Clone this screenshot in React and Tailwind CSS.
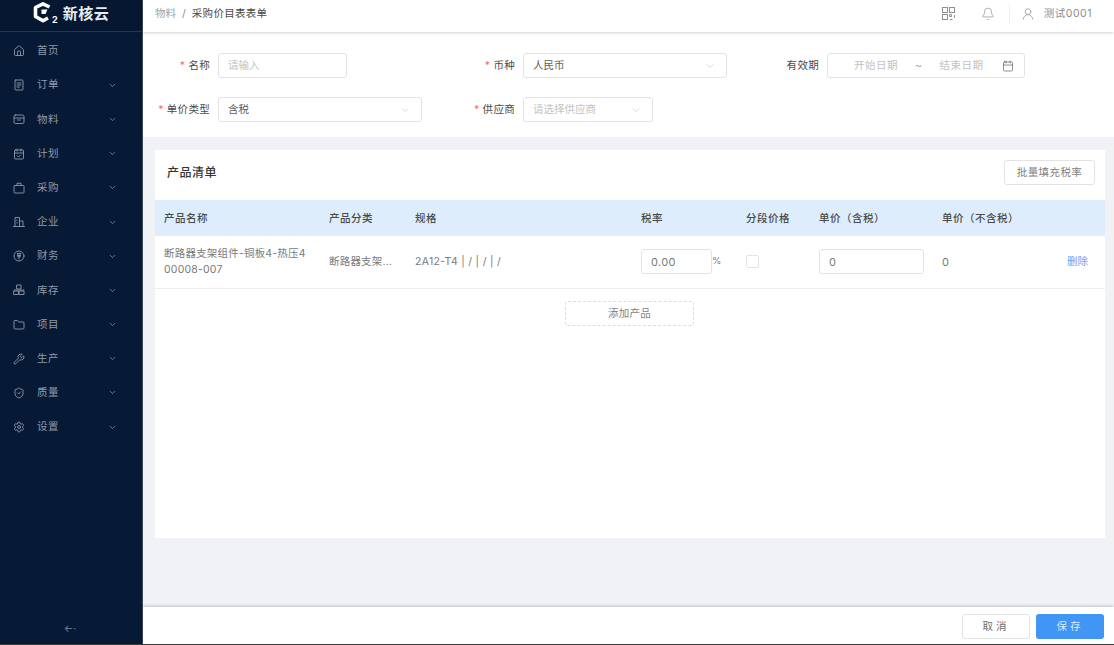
import React from "react";
import { ChevronDown, Bell, UserRound, Calendar, House, CalendarCheck, Folder, Wrench, ShieldCheck, Settings } from "lucide-react";

const Svg = ({ children }) => (
  <svg width="12" height="12" viewBox="0 0 24 24" fill="none" stroke="currentColor" strokeWidth="1.8" strokeLinejoin="round" strokeLinecap="round">
    {children}
  </svg>
);

const OrderIcon = () => (
  <Svg>
    <rect x="4" y="2" width="16" height="20" rx="1.5" />
    <path d="M8 8h8M8 12h8M8 16h5" />
  </Svg>
);
const MaterialIcon = () => (
  <Svg>
    <rect x="2" y="4" width="20" height="17" rx="3" />
    <path d="M2 10h20M9 14h6" />
  </Svg>
);
const BagIcon = () => (
  <Svg>
    <rect x="2" y="7" width="20" height="15" rx="1.5" />
    <path d="M8 7V2.5h8V7" />
  </Svg>
);
const CompanyIcon = () => (
  <Svg>
    <path d="M4 20V3h9v17M13 10h7v10M1 21h22M8 8v1M8 13v1" />
  </Svg>
);
const MoneyIcon = () => (
  <Svg>
    <circle cx="12" cy="12" r="10" />
    <path d="M9 7h6M9.5 11h5M9.5 7v6.5h5V7M12 13.5V18" />
  </Svg>
);
const StockIcon = () => (
  <Svg>
    <rect x="8" y="2" width="8" height="8" />
    <rect x="2" y="14" width="9" height="7" />
    <rect x="13" y="14" width="9" height="7" />
    <path d="M2 12h20" />
  </Svg>
);

const menu = [
  { label: "首页", icon: <House size={12} strokeWidth={1.8} />, arrow: false },
  { label: "订单", icon: <OrderIcon />, arrow: true },
  { label: "物料", icon: <MaterialIcon />, arrow: true },
  { label: "计划", icon: <CalendarCheck size={12} strokeWidth={1.8} />, arrow: true },
  { label: "采购", icon: <BagIcon />, arrow: true },
  { label: "企业", icon: <CompanyIcon />, arrow: true },
  { label: "财务", icon: <MoneyIcon />, arrow: true },
  { label: "库存", icon: <StockIcon />, arrow: true },
  { label: "项目", icon: <Folder size={12} strokeWidth={1.8} />, arrow: true },
  { label: "生产", icon: <Wrench size={12} strokeWidth={1.8} />, arrow: true },
  { label: "质量", icon: <ShieldCheck size={12} strokeWidth={1.8} />, arrow: true },
  { label: "设置", icon: <Settings size={12} strokeWidth={1.8} />, arrow: true },
];

const Logo = () => (
  <div className="flex items-start h-[31px] pl-[33px] pt-[2px]">
    <svg width="21" height="21" viewBox="0 0 21 21" fill="none" className="shrink-0">
      <path d="M16.5 5 L10 1.8 L2.5 5.5 V14.5 L10 18.8 L15 16" stroke="#ffffff" strokeWidth="3.6" strokeLinejoin="round" />
      <path d="M8.5 7.5 H14.5 L12.5 12 H8.5 Z" fill="#ffffff" />
    </svg>
    <span className="text-[9px] font-bold text-white -ml-[2px] mt-[13px] leading-none">2</span>
    <span className="ml-[5px] mt-[4px] text-[15px] leading-none font-bold text-[#e8ebef] tracking-[0.5px]">新核云</span>
  </div>
);

const Sidebar = () => (
  <aside className="w-[143px] shrink-0 bg-[#071a35] border-r border-[#3c4757] flex flex-col">
    <div className="bg-[#051731] border-b border-[#14396b]">
      <Logo />
    </div>
    <nav className="pt-[2px]">
      {menu.map((m) => (
        <div key={m.label} className="h-[34.2px] flex items-center pl-[13px] pr-[25px] text-[#8f99a9]">
          <span className="w-[12px] flex justify-center">{m.icon}</span>
          <span className="ml-[12px] text-[10.5px] tracking-[0.5px] flex-1">{m.label}</span>
          {m.arrow && <ChevronDown size={9} strokeWidth={2} className="text-[#8a95a5]" />}
        </div>
      ))}
    </nav>
    <div className="mt-auto pb-[11px] flex justify-center text-[#7b8695]">
      <span className="text-[10px] leading-none pr-[2px]">←·</span>
    </div>
  </aside>
);

const Topbar = () => (
  <header className="relative z-10 h-[32px] shrink-0 bg-white shadow-[0_1px_3px_rgba(0,0,0,0.18)] flex items-center pl-[12px] pr-[22px] pb-[5px] text-[10.5px]">
    <span className="text-[#a3a3a3]">物料</span>
    <span className="mx-[6px] text-[#8c8c8c]">/</span>
    <span className="text-[#4a4a4a] tracking-[0.3px]">采购价目表表单</span>
    <div className="ml-auto flex items-center text-[#8f8f8f]">
      <svg width="13" height="13" viewBox="0 0 13 13" fill="none" stroke="currentColor" strokeWidth="1">
        <rect x="0.5" y="0.5" width="5" height="5" />
        <rect x="7.5" y="0.5" width="5" height="5" />
        <rect x="0.5" y="7.5" width="5" height="5" />
        <path d="M7.5 7.5h2v2h-2zM12.5 8v3M8 12.5h2.5" />
      </svg>
      <Bell size={14} strokeWidth={1.2} className="ml-[26px]" />
      <span className="ml-[14px] w-px h-[18px] bg-[#efefef]" />
      <UserRound size={14} strokeWidth={1.2} className="ml-[11px]" />
      <span className="ml-[9px] text-[#8c8c8c] tracking-[0.5px]">测试0001</span>
    </div>
  </header>
);

const inputClass = "h-[25px] rounded-[3px] border border-[#e3e3e3] bg-white flex items-center px-[9px] pt-[1px] text-[10.5px]";

const Field = ({ label, required, children }) => (
  <div className="flex items-center">
    <label className="w-[67px] pt-[1px] text-right text-[10.5px] text-[#4a4a4a] whitespace-nowrap tracking-[0.3px]">
      {required && <span className="text-[#f26d6d] mr-[3px]">*</span>}
      {label}
    </label>
    <div className="ml-[8px]">{children}</div>
  </div>
);

const Select = ({ width, value, placeholder }) => (
  <div className={`${inputClass} ${width} justify-between`}>
    <span className={value ? "text-[#5e5e5e]" : "text-[#c2c2c2]"}>{value || placeholder}</span>
    <ChevronDown size={12} strokeWidth={1} className="text-[#b5b5b5] mr-[1px]" />
  </div>
);

const Form = () => (
  <section className="h-[105px] shrink-0 bg-white pt-[21px] grid grid-cols-[305px_304px_1fr] grid-rows-[25px_25px] gap-y-[19px]">
    <Field label="名称" required>
      <div className={`${inputClass} w-[129px] text-[#c2c2c2]`}>请输入</div>
    </Field>
    <Field label="币种" required>
      <Select width="w-[204px]" value="人民币" />
    </Field>
    <Field label="有效期">
      <div className={`${inputClass} w-[198px] text-[#c2c2c2] tracking-[0.5px]`}>
        <span className="ml-[17px]">开始日期</span>
        <span className="ml-[17px] text-[#9a9a9a]">~</span>
        <span className="ml-[17px]">结束日期</span>
        <Calendar size={12} strokeWidth={1.3} className="ml-auto mr-[1px] text-[#555555]" />
      </div>
    </Field>
    <Field label="单价类型" required>
      <Select width="w-[204px]" value="含税" />
    </Field>
    <Field label="供应商" required>
      <Select width="w-[130px]" placeholder="请选择供应商" />
    </Field>
  </section>
);

const rowGrid = "grid grid-cols-[165px_86px_226px_105px_73px_123px_1fr_auto] items-center pl-[9px] pr-[17px]";

const Products = () => (
  <section className="mt-[13px] ml-[12px] mr-[9px] h-[388px] bg-white">
    <div className="h-[50px] flex items-center justify-between pl-[12px] pr-[10px] pb-[5px]">
      <h2 className="text-[12px] font-medium text-[#333333] tracking-[0.5px]">产品清单</h2>
      <button className="h-[25px] w-[91px] rounded-[3px] border border-[#e3e3e3] text-[10.5px] text-[#7f7f7f] tracking-[0.4px]">批量填充税率</button>
    </div>
    <div className={`${rowGrid} h-[36px] pt-[1px] bg-[#deedfb] text-[10.5px] font-medium text-[#4a4a4a] tracking-[0.5px]`}>
      <span>产品名称</span>
      <span>产品分类</span>
      <span>规格</span>
      <span>税率</span>
      <span>分段价格</span>
      <span>单价（含税）</span>
      <span>单价（不含税）</span>
      <span />
    </div>
    <div className={`${rowGrid} h-[53px] pb-[1px] border-b border-[#eeeeee] text-[10.5px] text-[#7a7a7a]`}>
      <span className="mt-[1px] leading-[16.5px] w-[148px] break-all tracking-[0.2px]">断路器支架组件-铜板4-热压400008-007</span>
      <span className="mt-[1px] tracking-[0.2px]">断路器支架...</span>
      <span className="mt-[1px] tracking-[0.3px]">2A12-T4 | / | / | /</span>
      <div className="flex items-center">
        <div className={`${inputClass} w-[71px] text-[11px] tracking-[0.3px]`}>0.00</div>
        <span className="text-[9.5px]">%</span>
      </div>
      <span className="w-[13px] h-[13px] rounded-[2px] border border-[#e3e3e3]" />
      <div className={`${inputClass} w-[105px] text-[11px]`}>0</div>
      <span className="mt-[1px] text-[11px]">0</span>
      <span className="mt-[1px] text-[#6ea1f5]">删除</span>
    </div>
    <div className="flex justify-center mt-[12px] pr-[1px]">
      <button className="w-[129px] h-[25px] rounded-[3px] border border-dashed border-[#dddddd] text-[10.5px] text-[#7f7f7f] tracking-[0.3px]">添加产品</button>
    </div>
  </section>
);

const Footer = () => (
  <footer className="relative h-[37px] shrink-0 bg-white shadow-[0_-1px_3px_rgba(0,0,0,0.2)] flex items-center justify-end gap-[6px] pr-[10px] pt-[2px]">
    <button className="w-[68px] h-[25px] rounded-[3px] border border-[#e3e3e3] bg-white text-[10.5px] text-[#6e6e6e] tracking-[3px]">取消</button>
    <button className="w-[68px] h-[25px] rounded-[3px] bg-[#4095f5] text-[10.5px] text-[#d8e9fc] tracking-[3px]">保存</button>
  </footer>
);

export default function App() {
  return (
    <div
      className="h-screen w-full flex overflow-hidden border-b border-[#3a3a3a] bg-[#f0f2f6]"
      style={{ fontFamily: 'Inter, "Noto Sans CJK SC", sans-serif' }}
    >
      <Sidebar />
      <main className="flex-1 min-w-0 flex flex-col">
        <Topbar />
        <Form />
        <Products />
        <div className="flex-1" />
        <Footer />
      </main>
    </div>
  );
}
